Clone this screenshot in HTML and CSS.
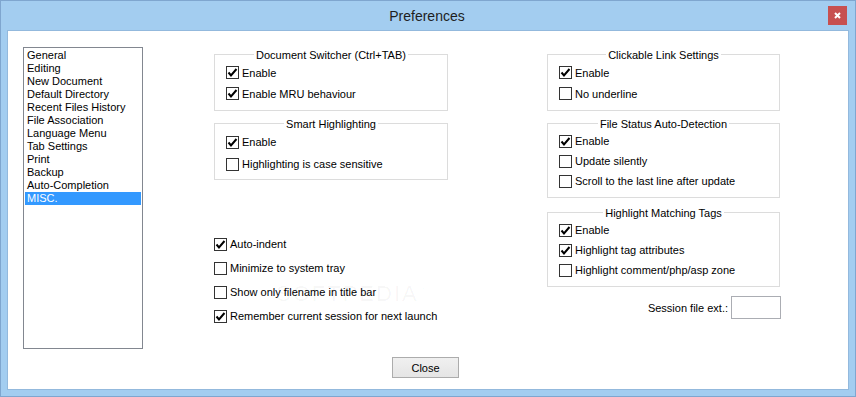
FILE: index.html
```
<!DOCTYPE html>
<html lang="en">
<head>
    <meta charset="UTF-8">
    <title>Preferences</title>
    <link rel="stylesheet" href="styles.css">
</head>
<body>
    <div class="window">
        <div class="titlebar">
            <span></span>
            <span class="title">Preferences</span>
            <span class="close-x">
                <svg width="19" height="19" viewBox="0 0 19 19"><path d="M7 7 L12 12 M12 7 L7 12" stroke="#fff" stroke-width="2"/></svg>
            </span>
        </div>

        <div class="client">
            <div class="main">
                <ul class="listbox">
                    <li>General</li>
                    <li>Editing</li>
                    <li>New Document</li>
                    <li>Default Directory</li>
                    <li>Recent Files History</li>
                    <li>File Association</li>
                    <li>Language Menu</li>
                    <li>Tab Settings</li>
                    <li>Print</li>
                    <li>Backup</li>
                    <li>Auto-Completion</li>
                    <li class="selected">MISC.</li>
                </ul>

                <div class="col col-mid">
                    <div class="group">
                        <div class="group-title">Document Switcher (Ctrl+TAB)</div>
                        <div class="check row-21"><span class="box on"><svg width="11" height="11" viewBox="0 0 11 11"><path d="M1.5 5.5 L4 8.5 L9.5 2" fill="none" stroke="#000" stroke-width="2"/></svg></span>Enable</div>
                        <div class="check row-21"><span class="box on"><svg width="11" height="11" viewBox="0 0 11 11"><path d="M1.5 5.5 L4 8.5 L9.5 2" fill="none" stroke="#000" stroke-width="2"/></svg></span>Enable MRU behaviour</div>
                    </div>

                    <div class="group group-smart">
                        <div class="group-title">Smart Highlighting</div>
                        <div class="check row-22"><span class="box on"><svg width="11" height="11" viewBox="0 0 11 11"><path d="M1.5 5.5 L4 8.5 L9.5 2" fill="none" stroke="#000" stroke-width="2"/></svg></span>Enable</div>
                        <div class="check row-22"><span class="box"></span>Highlighting is case sensitive</div>
                    </div>

                    <div class="misc-checks">
                        <div class="check row-24"><span class="box on"><svg width="11" height="11" viewBox="0 0 11 11"><path d="M1.5 5.5 L4 8.5 L9.5 2" fill="none" stroke="#000" stroke-width="2"/></svg></span>Auto-indent</div>
                        <div class="check row-24"><span class="box"></span>Minimize to system tray</div>
                        <div class="check row-24"><span class="box"></span>Show only filename in title bar</div>
                        <div class="check row-24"><span class="box on"><svg width="11" height="11" viewBox="0 0 11 11"><path d="M1.5 5.5 L4 8.5 L9.5 2" fill="none" stroke="#000" stroke-width="2"/></svg></span>Remember current session for next launch</div>
                    </div>
                </div>

                <div class="col col-right">
                    <div class="group">
                        <div class="group-title">Clickable Link Settings</div>
                        <div class="check row-21"><span class="box on"><svg width="11" height="11" viewBox="0 0 11 11"><path d="M1.5 5.5 L4 8.5 L9.5 2" fill="none" stroke="#000" stroke-width="2"/></svg></span>Enable</div>
                        <div class="check row-21"><span class="box"></span>No underline</div>
                    </div>

                    <div class="group">
                        <div class="group-title">File Status Auto-Detection</div>
                        <div class="check row-20"><span class="box on"><svg width="11" height="11" viewBox="0 0 11 11"><path d="M1.5 5.5 L4 8.5 L9.5 2" fill="none" stroke="#000" stroke-width="2"/></svg></span>Enable</div>
                        <div class="check row-20"><span class="box"></span>Update silently</div>
                        <div class="check row-20"><span class="box"></span>Scroll to the last line after update</div>
                    </div>

                    <div class="group group-tags">
                        <div class="group-title">Highlight Matching Tags</div>
                        <div class="check row-20"><span class="box on"><svg width="11" height="11" viewBox="0 0 11 11"><path d="M1.5 5.5 L4 8.5 L9.5 2" fill="none" stroke="#000" stroke-width="2"/></svg></span>Enable</div>
                        <div class="check row-20"><span class="box on"><svg width="11" height="11" viewBox="0 0 11 11"><path d="M1.5 5.5 L4 8.5 L9.5 2" fill="none" stroke="#000" stroke-width="2"/></svg></span>Highlight tag attributes</div>
                        <div class="check row-20"><span class="box"></span>Highlight comment/php/asp zone</div>
                    </div>

                    <div class="session">
                        <span>Session file ext.:</span>
                        <span class="textbox"></span>
                    </div>
                </div>
            </div>

            <div class="footer">
                <button class="btn">Close</button>
            </div>

            <div class="watermark">SOFTPEDIA<sup>™</sup></div>
        </div>
    </div>
</body>
</html>
```

FILE: styles.css
```
body {
    margin: 0;
    font-family: 'Liberation Sans', Arial, sans-serif;
    font-size: 11px;
    color: #000;
}
.window {
    width: 856px;
    height: 397px;
    box-sizing: border-box;
    border: 1px solid #7fa6cf;
    background: #a3cdf0;
    padding: 0 6px 6px 6px;
    display: flex;
    flex-direction: column;
}
.titlebar {
    height: 29px;
    display: grid;
    grid-template-columns: 1fr auto 1fr;
    align-items: center;
    margin-right: 2px;
}
.title {
    font-size: 14px;
    color: #1e1e1e;
    padding-top: 1px;
}
.close-x {
    justify-self: end;
    width: 19px;
    height: 19px;
    background: #c75050;
}
.close-x svg {
    display: block;
}
.client {
    flex: 1;
    background: #fff;
    border: 1px solid #93b9dd;
    position: relative;
}
.main {
    display: flex;
    align-items: flex-start;
    padding-left: 15px;
}
.listbox {
    list-style: none;
    margin: 16px 0 0 0;
    padding: 1px 0 0 0;
    width: 120px;
    height: 302px;
    box-sizing: border-box;
    border: 1px solid #828790;
}
.listbox li {
    height: 13px;
    line-height: 13px;
    margin: 0 1px;
    padding-left: 2px;
    white-space: nowrap;
}
.listbox li.selected {
    background: #3399ff;
    color: #fff;
}
.col {
    display: flex;
    flex-direction: column;
    margin-top: 23px;
}
.col-mid {
    width: 234px;
    margin-left: 71px;
}
.col-right {
    width: 234px;
    margin-left: 99px;
}
.col-right .group {
    width: 233px;
}
.group {
    border: 1px solid #dcdcdc;
    padding-bottom: 6px;
    box-sizing: border-box;
}
.group + .group {
    margin-top: 12px;
}
.group-smart {
    padding-bottom: 4px;
}
.col-right .group-tags {
    margin-top: 14px;
}
.group-title {
    width: fit-content;
    margin: -7px auto 0;
    height: 14px;
    line-height: 14px;
    padding: 0 2px;
    background: #fff;
}
.check {
    display: flex;
    align-items: center;
    padding-left: 11px;
    white-space: nowrap;
}
.row-20 { height: 20px; }
.row-21 { height: 21px; }
.row-22 { height: 22px; }
.row-24 { height: 24px; }
.box {
    width: 13px;
    height: 13px;
    box-sizing: border-box;
    border: 1px solid #333;
    background: #fff;
    margin-right: 3px;
    flex: none;
}
.box svg {
    display: block;
}
.misc-checks {
    margin-top: 52px;
}
.misc-checks .check {
    padding-left: 0;
}
.session {
    display: flex;
    justify-content: flex-end;
    align-items: center;
    gap: 3px;
    margin-top: 9px;
}
.textbox {
    width: 50px;
    height: 23px;
    box-sizing: border-box;
    border: 1px solid #abadb3;
}
.footer {
    display: flex;
    justify-content: center;
    margin-top: 8px;
    padding-right: 5px;
}
.btn {
    width: 67px;
    height: 21px;
    border: 1px solid #acacac;
    background: linear-gradient(#f0f0f0, #e5e5e5);
    font-family: 'Liberation Sans', Arial, sans-serif;
    font-size: 11px;
    color: #000;
    padding: 0;
}
.watermark {
    position: absolute;
    left: 268px;
    top: 250px;
    font-size: 22px;
    letter-spacing: 2px;
    color: rgba(0, 0, 0, 0.04);
    pointer-events: none;
}
.watermark sup {
    font-size: 8px;
}
```
